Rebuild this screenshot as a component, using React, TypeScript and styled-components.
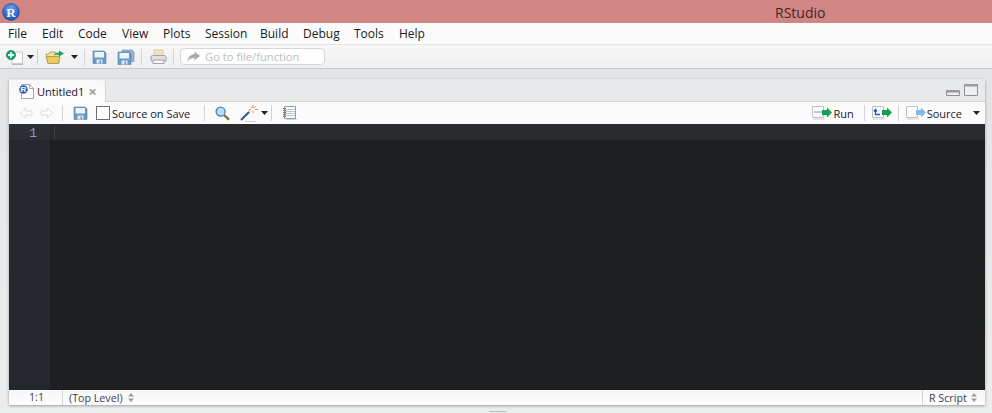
import React from 'react'
import styled, { createGlobalStyle } from 'styled-components'

const Global = createGlobalStyle`
  html, body { margin: 0; padding: 0; background: #f0f0f0; }
  body { font-family: "Open Sans", "Noto Sans", sans-serif; overflow: hidden; }
  #root { width: 992px; height: 413px; }
`

const Window = styled.div`
  width: 992px;
  height: 413px;
  display: flex;
  flex-direction: column;
  background: #e6e7e9;
`

const TitleBar = styled.div`
  height: 23px;
  flex: none;
  background: #d28684;
  display: flex;
  align-items: center;
  padding-left: 2px;
`

const TitleText = styled.div`
  margin-left: 755px;
  font-size: 14px;
  color: #3a2a2a;
  padding-top: 1px;
`

const MenuBar = styled.div`
  height: 21px;
  flex: none;
  background: #fbfbfc;
  display: flex;
  align-items: center;
  padding-left: 8px;
  font-size: 12px;
  color: #1a1a1a;
`

const MenuItem = styled.span<{ $w: number }>`
  width: ${p => p.$w}px;
  flex: none;
`

const MainToolbar = styled.div`
  height: 25px;
  flex: none;
  background: linear-gradient(#f6f6f7, #eeeff0);
  border-top: 1px solid #e4e4e6;
  border-bottom: 1px solid #c9cacc;
  box-sizing: border-box;
  display: flex;
  align-items: center;
  padding-left: 6px;
`

const Sep = styled.div<{ $l?: number; $r?: number }>`
  width: 1px;
  height: 16px;
  background: #d2d3d6;
  margin: 0 ${p => p.$r ?? 5}px 0 ${p => p.$l ?? 5}px;
  flex: none;
`

const IconSlot = styled.span<{ $w: number; $ml?: number }>`
  display: inline-flex;
  flex: none;
  width: ${p => p.$w}px;
  margin-left: ${p => p.$ml ?? 0}px;
  align-items: center;
`

const GoTo = styled.div`
  width: 145px;
  height: 17px;
  box-sizing: border-box;
  border: 1px solid #d4d5d8;
  border-radius: 4px;
  background: #fdfdfd;
  display: flex;
  align-items: center;
  gap: 5px;
  padding-left: 6px;
  font-size: 11.2px;
  color: #bdbec1;
`

const Workspace = styled.div`
  flex: 1;
  padding: 10px 7px 0 9px;
  background: linear-gradient(#e3e4e6, #eceded);
  min-height: 0;
`

const Pane = styled.div`
  height: 326px;
  display: flex;
  flex-direction: column;
  box-shadow: 0 1px 3px rgba(0, 0, 0, 0.35);
  border-radius: 3px 3px 0 0;
`

const SplitterGrip = styled.div`
  width: 17px;
  height: 1px;
  margin: 6px auto 0;
  background: #b8bcc4;
`

const TabBar = styled.div`
  height: 23px;
  flex: none;
  background: #e8e9eb;
  display: flex;
  align-items: flex-end;
  justify-content: space-between;
  border-radius: 3px 3px 0 0;
  border-bottom: 1px solid #d3d4d6;
  box-sizing: border-box;
`

const Tab = styled.div`
  width: 97px;
  height: 22px;
  margin-bottom: -1px;
  box-sizing: border-box;
  background: linear-gradient(#f7f7f8, #fdfdfd);
  border-right: 1px solid #d3d4d6;
  border-radius: 3px 3px 0 0;
  display: flex;
  align-items: center;
  padding-left: 10px;
  gap: 3px;
  font-size: 11px;
  color: #1c1030;
`

const TabClose = styled.span`
  color: #9d9ea1;
  font-size: 15px;
  font-weight: 700;
  line-height: 1;
  margin-left: 1px;
`

const WindowControls = styled.div`
  display: flex;
  align-items: flex-end;
  gap: 4px;
  margin: 0 7px 5px 0;
`

const EditorToolbar = styled.div`
  height: 22px;
  flex: none;
  background: #fbfbfc;
  display: flex;
  align-items: center;
  padding-left: 10px;
  font-size: 11px;
  color: #20202a;
`

const Check = styled.span`
  width: 14px;
  height: 14px;
  box-sizing: border-box;
  border: 1px solid #6f6f6f;
  background: #fff;
  flex: none;
`

const Spacer = styled.div`
  flex: 1;
`

const ToolLabel = styled.span<{ $ml?: number }>`
  margin-left: ${p => p.$ml ?? 1}px;
`

const Editor = styled.div`
  flex: 1;
  display: flex;
  background: #1d1f21;
  min-height: 0;
`

const Gutter = styled.div`
  width: 41px;
  flex: none;
  background: #24272b;
`

const GutterRow = styled.div`
  height: 16px;
  background: #2b2e33;
  box-sizing: border-box;
  padding-right: 13px;
  text-align: right;
  font-family: "Liberation Mono", monospace;
  font-size: 13px;
  line-height: 19px;
  color: #81a2be;
`

const Code = styled.div`
  flex: 1;
`

const ActiveLine = styled.div`
  height: 16px;
  background: #282a2e;
  position: relative;
`

const Cursor = styled.div`
  position: absolute;
  left: 4px;
  top: 2px;
  width: 1px;
  height: 13px;
  background: #3f4247;
`

const StatusBar = styled.div`
  height: 15px;
  flex: none;
  background: linear-gradient(#f7f7f8, #fdfdfd);
  display: flex;
  align-items: center;
  font-size: 10.7px;
  color: #3c3c55;
`

const Position = styled.div`
  width: 54px;
  height: 100%;
  box-sizing: border-box;
  border-right: 1px solid #d3d4d6;
  padding-left: 2px;
  text-align: center;
  line-height: 15px;
  flex: none;
`

const Scope = styled.div`
  margin-left: 6px;
  display: flex;
  align-items: center;
  gap: 5px;
`

const FileType = styled.div`
  height: 100%;
  width: 63px;
  box-sizing: border-box;
  border-left: 1px solid #d3d4d6;
  padding-left: 6px;
  display: flex;
  align-items: center;
  gap: 4px;
`

const RLogo = () => (
  <svg width="18" height="18" viewBox="0 0 18 18">
    <defs>
      <radialGradient id="rg" cx="50%" cy="30%" r="70%">
        <stop offset="0" stopColor="#6aa5ee" />
        <stop offset="1" stopColor="#1550b8" />
      </radialGradient>
    </defs>
    <circle cx="9" cy="9" r="8.4" fill="url(#rg)" stroke="#12398a" strokeWidth="0.5" />
    <text x="9" y="13.5" textAnchor="middle" fontFamily="Liberation Serif, serif" fontWeight="700" fontSize="13" fill="#f2f6fc">R</text>
  </svg>
)

const Caret = () => (
  <svg width="7" height="4" viewBox="0 0 7 4">
    <path d="M0 0h7L3.5 4z" fill="#222" />
  </svg>
)

const NewFile = () => (
  <svg width="19" height="16" viewBox="0 0 19 16">
    <path d="M6 3h10.5v11.5H6z" fill="#fdfdfd" stroke="#c6c7c9" />
    <path d="M6 15.5h11" stroke="#bbb" />
    <circle cx="5" cy="6" r="4.6" fill="#19a06a" stroke="#0d7a4f" strokeWidth="0.6" />
    <path d="M5 3.2v5.6M2.2 6h5.6" stroke="#fff" strokeWidth="1.8" />
  </svg>
)

const Folder = () => (
  <svg width="21" height="16" viewBox="0 0 21 16">
    <path d="M1 5h3l1-2h5l1 2h3v9H3z" fill="#f3e3a4" stroke="#a8924a" strokeWidth="0.8" />
    <path d="M1 7.5h14L13.5 14.5H3z" fill="#ecc95f" stroke="#a8924a" strokeWidth="0.8" />
    <path d="M9 6.5c0-2 2-3 5-3V1.5L19 4.5l-5 3V5.5c-2 0-4 0-5 1z" fill="#14a56a" />
  </svg>
)

const Floppy = () => (
  <g>
    <path d="M1 2h11l2 2v10.5H1z" fill="#6c9ac6" stroke="#5680a8" strokeWidth="0.6" />
    <path d="M2.5 3h9.5v5.5H2.5z" fill="#eef3f8" />
    <path d="M4.5 10.5h6v4h-6z" fill="#dbe9f6" />
    <path d="M7.5 11.5h1.5v3H7.5z" fill="#6c9ac6" />
  </g>
)

const SaveIcon = () => (
  <svg width="15" height="16" viewBox="0 0 15 16">
    <Floppy />
  </svg>
)

const SaveAllIcon = () => (
  <svg width="18" height="16" viewBox="0 0 18 16">
    <path d="M5 1h10l2 2v9.5H14V4H5z" fill="#9cb6d0" stroke="#6f92b5" strokeWidth="0.6" />
    <g transform="translate(0 1)">
      <Floppy />
    </g>
  </svg>
)

const Printer = () => (
  <svg width="17" height="16" viewBox="0 0 17 16">
    <path d="M4 1h9v6H4z" fill="#efe3bd" stroke="#c9bd95" strokeWidth="0.7" />
    <rect x="1" y="6.5" width="15" height="6" rx="1.5" fill="#dfe0e3" stroke="#8e9196" strokeWidth="0.8" />
    <path d="M3 11h11v3.5H3z" fill="#f5f5f6" stroke="#8e9196" strokeWidth="0.8" />
  </svg>
)

const GoArrow = () => (
  <svg width="13" height="11" viewBox="0 0 13 11">
    <path d="M7.5 0.5L13 5l-5.5 4.5V7C4 7 2 8 0.5 10.5 1 6 3.5 3.5 7.5 3z" fill="#a9abaf" />
  </svg>
)

const DocR = () => (
  <svg width="15" height="15" viewBox="0 0 15 15">
    <path d="M2.5.5h8l4 4v10h-12z" fill="#fff" stroke="#8f9095" strokeWidth="0.8" />
    <path d="M10.5.5v4h4" fill="none" stroke="#8f9095" strokeWidth="0.8" />
    <circle cx="4.5" cy="5.5" r="4.3" fill="#2b5fae" />
    <text x="4.5" y="8.4" textAnchor="middle" fontFamily="Liberation Sans, sans-serif" fontWeight="700" fontSize="8" fill="#fff">R</text>
  </svg>
)

const Minimize = () => (
  <svg width="14" height="6" viewBox="0 0 14 6" style={{ display: 'block' }}>
    <path d="M.5 2h13v3.5H.5z" fill="#eeeff0" stroke="#8f9093" />
    <path d="M0 0h14v2H0z" fill="#9a9b9e" />
  </svg>
)

const Maximize = () => (
  <svg width="14" height="12" viewBox="0 0 14 12" style={{ display: 'block' }}>
    <path d="M.5.5h13v11H.5z" fill="#eeeff0" stroke="#8f9093" />
    <path d="M0 0h14v2.5H0z" fill="#9a9b9e" />
  </svg>
)

const NavArrow = ({ flip }: { flip?: boolean }) => (
  <svg width="14" height="12" viewBox="0 0 14 12" style={flip ? { transform: 'scaleX(-1)' } : undefined}>
    <path d="M1 6l5.5-5v3h6.5v4H6.5v3z" fill="#fbfbfb" stroke="#dcdde0" />
  </svg>
)

const Magnifier = () => (
  <svg width="15" height="15" viewBox="0 0 16 16">
    <path d="M9.5 9.5L15 14.5" stroke="#8a6a3c" strokeWidth="2.4" />
    <circle cx="6" cy="6" r="4.8" fill="#bcdcf4" stroke="#4f86ad" strokeWidth="1.4" />
  </svg>
)

const Wand = () => (
  <svg width="18" height="17" viewBox="0 0 18 17">
    <path d="M1 15L10 6" stroke="#2f5f8f" strokeWidth="2.2" />
    <path d="M9 7L11 5" stroke="#e8e8ee" strokeWidth="2.2" />
    <path d="M13 0v3M13 6v2M15 4.500h3M9 4.500h2M15.500 1.500l-1.500 1.500M10.500 1.500l1.500 1.500" stroke="#e8883a" strokeWidth="1" />
    <path d="M5 16.500h11" stroke="#d0d0d2" />
  </svg>
)

const Notebook = () => (
  <svg width="16" height="16" viewBox="0 0 16 16">
    <path d="M2.500 1.500h11v12h-11z" fill="#fafbfc" stroke="#9a9ca0" />
    <path d="M3 4.500h10M3 6.500h10M3 8.500h10M3 10.500h10" stroke="#bcc7d6" />
    <path d="M1 3.500h3M1 5.500h3M1 7.500h3M1 9.500h3M1 11.500h3" stroke="#6f7175" />
    <path d="M4 14.500h11" stroke="#d6d6d8" />
  </svg>
)

const PageArrow = ({ color, inner }: { color: string; inner?: 'run' | 're' }) => (
  <svg width="20" height="14" viewBox="0 0 20 14">
    <path d="M.5 .5h11v11H.5z" fill="#fdfdfd" stroke="#bfc0c3" />
    <path d="M1 13h12" stroke="#d0d0d2" />
    {inner === 'run' && <path d="M2 6h9" stroke="#b5cdea" strokeWidth="2" />}
    {inner === 're' && <path d="M8 8.500H3.500V4.500M2 5.500l1.500-2 1.500 2" fill="none" stroke="#1f5fc0" strokeWidth="1.400" />}
    <path d="M10 4h5V1.500L20 6.500l-5 5V9h-5z" fill={color} />
  </svg>
)

const Updown = () => (
  <svg width="6" height="9" viewBox="0 0 6 9">
    <path d="M3 0l3 3.400H0zM3 9L0 5.600h6z" fill="#9a9ba0" />
  </svg>
)

const menus: [string, number][] = [
  ['File', 34], ['Edit', 36], ['Code', 44], ['View', 41], ['Plots', 42], ['Session', 55],
  ['Build', 43], ['Debug', 51], ['Tools', 45], ['Help', 40],
]

export default function App() {
  return (
    <Window>
      <Global />
      <TitleBar>
        <RLogo />
        <TitleText>RStudio</TitleText>
      </TitleBar>
      <MenuBar>
        {menus.map(([label, w]) => (
          <MenuItem key={label} $w={w}>{label}</MenuItem>
        ))}
      </MenuBar>
      <MainToolbar>
        <IconSlot $w={20}><NewFile /></IconSlot>
        <IconSlot $w={7} $ml={1}><Caret /></IconSlot>
        <Sep $l={3} $r={7} />
        <IconSlot $w={24}><Folder /></IconSlot>
        <IconSlot $w={7} $ml={2}><Caret /></IconSlot>
        <Sep $l={6} $r={7} />
        <IconSlot $w={17}><SaveIcon /></IconSlot>
        <IconSlot $w={18} $ml={8}><SaveAllIcon /></IconSlot>
        <Sep $l={6} $r={8} />
        <IconSlot $w={17}><Printer /></IconSlot>
        <Sep $l={6} $r={6} />
        <GoTo>
          <GoArrow />
          Go to file/function
        </GoTo>
      </MainToolbar>
      <Workspace>
        <Pane>
          <TabBar>
            <Tab>
              <DocR />
              Untitled1
              <TabClose>×</TabClose>
            </Tab>
            <WindowControls>
              <Minimize />
              <Maximize />
            </WindowControls>
          </TabBar>
          <EditorToolbar>
            <NavArrow />
            <IconSlot $w={14} $ml={7}><NavArrow flip /></IconSlot>
            <Sep $l={8} $r={10} />
            <IconSlot $w={15}><SaveIcon /></IconSlot>
            <IconSlot $w={14} $ml={8}><Check /></IconSlot>
            <ToolLabel $ml={2}>Source on Save</ToolLabel>
            <Sep $l={14} $r={10} />
            <Magnifier />
            <IconSlot $w={18} $ml={10}><Wand /></IconSlot>
            <IconSlot $w={7} $ml={3}><Caret /></IconSlot>
            <Sep $l={3} $r={10} />
            <IconSlot $w={16}><Notebook /></IconSlot>
            <Spacer />
            <PageArrow color="#12a154" inner="run" />
            <ToolLabel>Run</ToolLabel>
            <Sep $l={10} $r={7} />
            <PageArrow color="#12a154" inner="re" />
            <Sep $l={6} $r={7} />
            <PageArrow color="#82b8ea" />
            <ToolLabel>Source</ToolLabel>
            <IconSlot $w={7} $ml={11}><Caret /></IconSlot>
            <IconSlot $w={5} />
          </EditorToolbar>
          <Editor>
            <Gutter>
              <GutterRow>1</GutterRow>
            </Gutter>
            <Code>
              <ActiveLine>
                <Cursor />
              </ActiveLine>
            </Code>
          </Editor>
          <StatusBar>
            <Position>1:1</Position>
            <Scope>
              (Top Level)
              <Updown />
            </Scope>
            <Spacer />
            <FileType>
              R Script
              <Updown />
            </FileType>
          </StatusBar>
        </Pane>
        <SplitterGrip />
      </Workspace>
    </Window>
  )
}
